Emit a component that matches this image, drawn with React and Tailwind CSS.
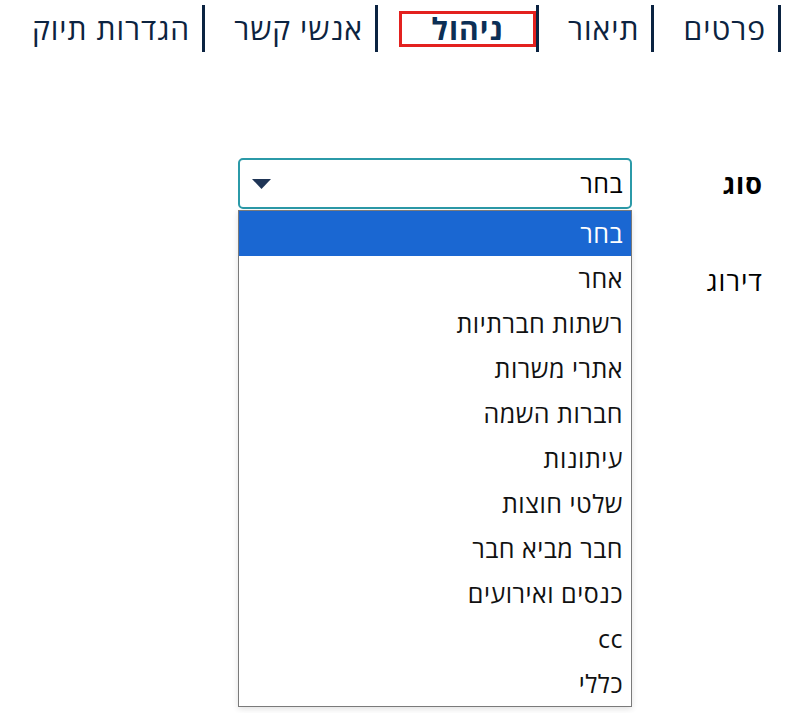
import React from "react";

const TABS = [
  { label: "פרטים" },
  { label: "תיאור" },
  { label: "ניהול", active: true },
  { label: "אנשי קשר" },
  { label: "הגדרות תיוק" },
];

const OPTIONS = [
  "בחר",
  "אחר",
  "רשתות חברתיות",
  "אתרי משרות",
  "חברות השמה",
  "עיתונות",
  "שלטי חוצות",
  "חבר מביא חבר",
  "כנסים ואירועים",
  "cc",
  "כללי",
];

function Caret() {
  return (
    <svg width="19" height="10" viewBox="0 0 19 10" className="block">
      <path d="M0 0 L19 0 L9.5 10 Z" fill="#1f3556" />
    </svg>
  );
}

export default function App() {
  return (
    <div
      dir="rtl"
      className="w-[802px] h-[713px] bg-white overflow-hidden text-[#0c2340]"
      style={{ fontFamily: '"Open Sans", "DejaVu Sans", sans-serif' }}
    >
      {/* Tabs */}
      <nav className="flex pr-[21px] pt-[5px]">
        {TABS.map((tab) =>
          tab.active ? (
            <div
              key={tab.label}
              className="flex items-center h-[47px] border-r-[3px] border-[#0b2341] ml-[21px]"
            >
              <span className="flex items-center justify-center w-[137px] h-[36px] border-[3px] border-[#e3211f] text-[30px] tracking-[1px] font-bold leading-none text-[#0c2f55]">
                {tab.label}
              </span>
            </div>
          ) : (
            <div
              key={tab.label}
              className="flex items-center h-[47px] border-r-[3px] border-[#0b2341] pr-[12px] ml-[29px] text-[30px] tracking-[1px] leading-none"
            >
              {tab.label}
            </div>
          )
        )}
      </nav>

      {/* Form */}
      <div className="pr-[39px] pt-[106px] text-black">
        <div className="flex items-center h-[51px]">
          <div className="w-[131px] text-[27px] tracking-[1px] font-bold leading-none">סוג</div>
          <div className="relative w-[394px] h-[51px]">
            <div className="flex items-center justify-between h-full border-2 border-[#2b9aa8] rounded-[5px] pr-[7px] pl-[12px] text-[25px] tracking-[0.5px]">
              <span>בחר</span>
              <Caret />
            </div>

            {/* open list */}
            <ul className="absolute top-[52px] right-0 w-[394px] bg-white border border-[#7a7a7a] shadow-[0_2px_6px_rgba(0,0,0,0.12)] z-10">
              {OPTIONS.map((opt, i) => (
                <li
                  key={opt}
                  className={
                    "flex items-center h-[45px] pr-[8px] text-[25px] tracking-[0.5px] " +
                    (i === 0 ? "bg-[#1a67d2] text-white" : "text-[#111]")
                  }
                >
                  {opt}
                </li>
              ))}
            </ul>
          </div>
        </div>

        <div className="flex items-center h-[51px] mt-[46px]">
          <div className="w-[131px] text-[27px] tracking-[1px] leading-none">דירוג</div>
          <div className="w-[394px] h-[51px] border-2 border-[#ccc] rounded-[5px]" />
        </div>
      </div>
    </div>
  );
}
